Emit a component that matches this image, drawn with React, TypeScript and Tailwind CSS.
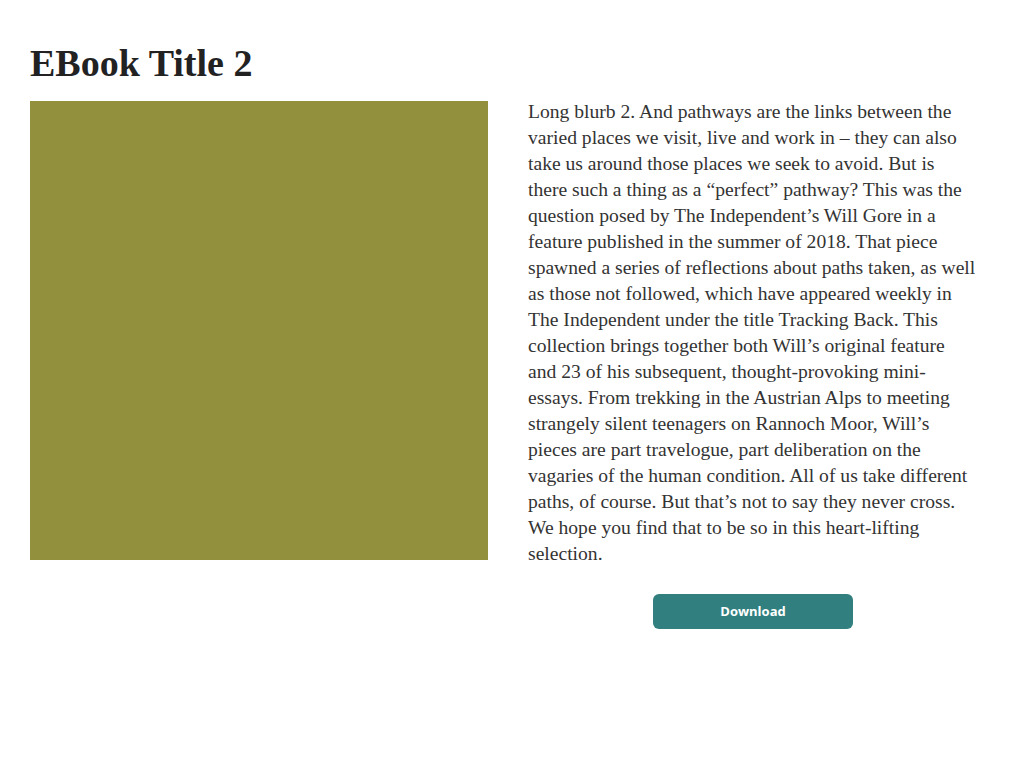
import React from "react";

const blurb =
    "Long blurb 2. And pathways are the links between the varied places we visit, live and work in – they can also take us around those places we seek to avoid. But is there such a thing as a “perfect” pathway? This was the question posed by The Independent’s Will Gore in a feature published in the summer of 2018. That piece spawned a series of reflections about paths taken, as well as those not followed, which have appeared weekly in The Independent under the title Tracking Back. This collection brings together both Will’s original feature and 23 of his subsequent, thought-provoking mini-essays. From trekking in the Austrian Alps to meeting strangely silent teenagers on Rannoch Moor, Will’s pieces are part travelogue, part deliberation on the vagaries of the human condition. All of us take different paths, of course. But that’s not to say they never cross. We hope you find that to be so in this heart-lifting selection.";

const App: React.FC = () => {
    return (
        <div className="min-h-screen bg-white px-[30px] pt-[40px] font-['Liberation_Serif',serif]">
            <h1 className="text-[38px] leading-[46px] font-bold text-[#222] mb-[15px]">
                EBook Title 2
            </h1>
            <div className="flex gap-10">
                <div className="w-[458px] h-[459px] shrink-0 bg-[#928f3d]" />
                <div className="w-[448px] flex flex-col">
                    <p className="-mt-[2px] text-[19.6px] leading-[26px] text-[#333]">
                        {blurb}
                    </p>
                    <div className="flex justify-center pl-[2px] mt-[27px]">
                        <button
                            type="button"
                            className="w-[200px] h-[35px] rounded-md bg-[#317f7f] text-white text-[13px] font-bold font-['Open_Sans',sans-serif]"
                        >
                            Download
                        </button>
                    </div>
                </div>
            </div>
        </div>
    );
};

export default App;
